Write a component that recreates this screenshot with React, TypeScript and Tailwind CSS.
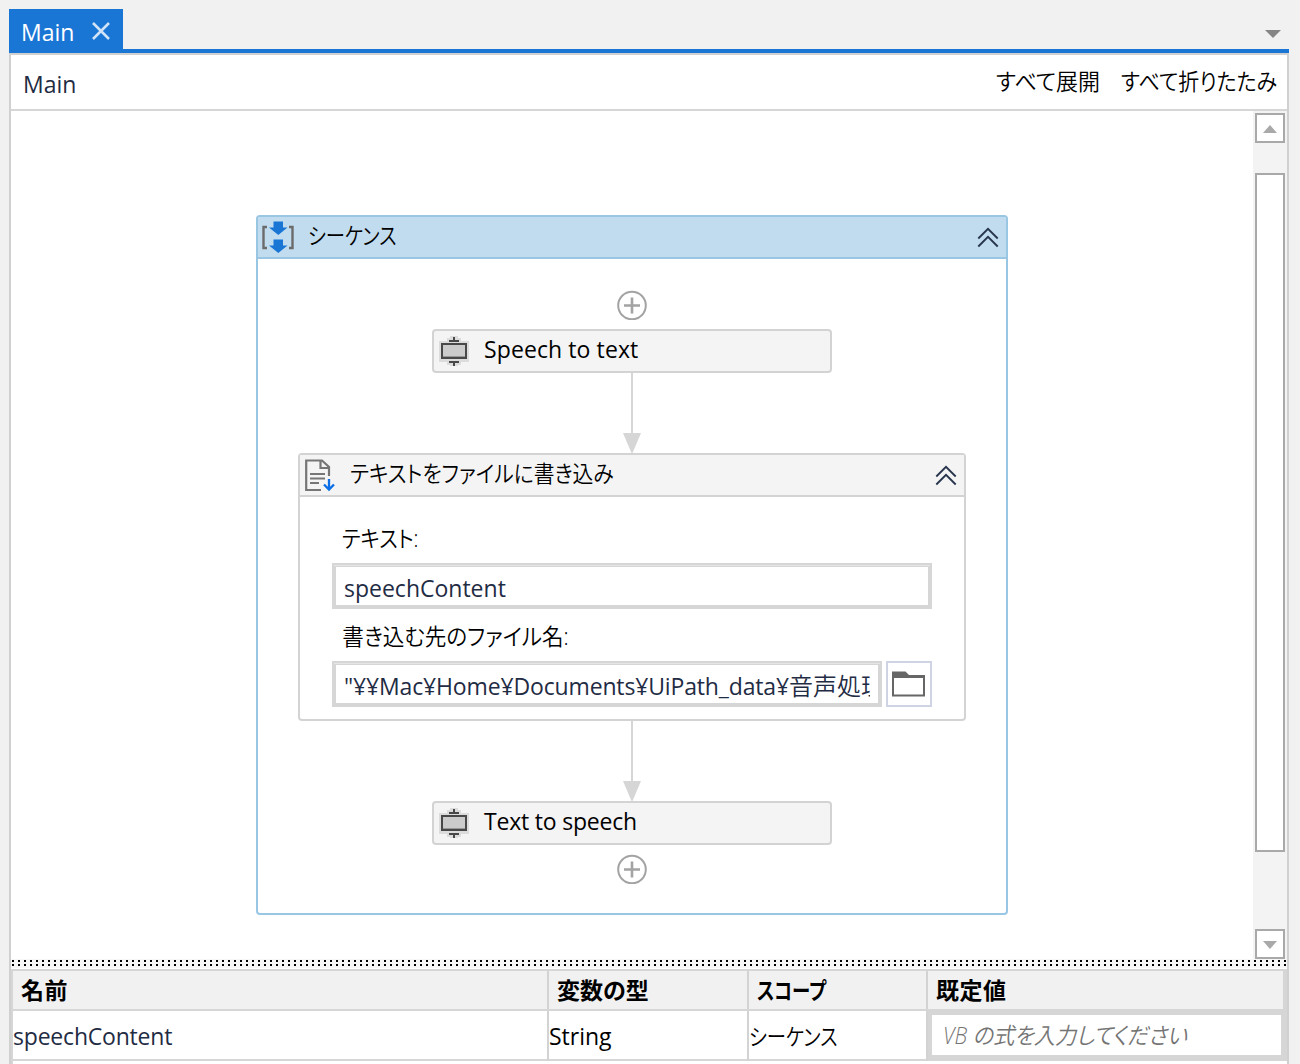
import type { ReactNode } from 'react';
import { clsx } from 'clsx';

const variable = {
  name: 'speechContent',
  type: 'String',
  scope: 'シーケンス',
};

function SequenceIcon() {
  return (
    <svg width="34" height="38" viewBox="0 0 34 38" className="shrink-0">
      <path d="M6 10H2.500v21H6M28 10h3.500v21H28" fill="none" stroke="#6b6b6b" strokeWidth="2.400" />
      <path d="M12.500 4.500h9.500v6h4.500l-9.200 7.500L8 10.500h4.500z" fill="#1976d5" />
      <path d="M12.500 22.500h9.500v6h4.500l-9.200 7.500L8 28.500h4.500z" fill="#1976d5" />
    </svg>
  );
}

function CollapseIcon() {
  return (
    <svg width="22" height="22" viewBox="0 0 22 22" fill="none" stroke="#27354d" strokeWidth="1.900" className="shrink-0">
      <path d="M1.300 11.500 11 1.800 20.700 11.500M1.300 19.500 11 9.800 20.700 19.500" />
    </svg>
  );
}

function ActivityIcon() {
  return (
    <svg width="30" height="32" viewBox="0 0 30 32" className="shrink-0">
      <path d="M11 1h8v2h3v3h8v21h-8v3h-3v1h-8v-1H8v-3H0V6h8V3h3z" fill="#dcdcdc" />
      <path d="M10 6h10M10 27h10" stroke="#484848" strokeWidth="2" />
      <path d="M15 2v4M15 27v4" stroke="#484848" strokeWidth="2" />
      <rect x="3" y="9" width="24" height="14" fill="#cbcbcb" stroke="#484848" strokeWidth="2" />
      <path d="M4 21.500h22" stroke="#989898" />
    </svg>
  );
}

function WriteFileIcon() {
  return (
    <svg width="30" height="33" viewBox="0 0 30 33" fill="none" strokeWidth="2.200" className="shrink-0">
      <path d="M24 17V8l-7-6.500H1.200V31H16M15.500 1v8H24" stroke="#767676" />
      <path d="M5 15h15M5 19.500h15M5 24h9" stroke="#767676" />
      <path d="M24 20v10M19 25.500l5 5 5-5" stroke="#0a6ee6" strokeWidth="2.300" />
    </svg>
  );
}

function FolderIcon() {
  return (
    <svg width="34" height="26" viewBox="0 0 34 26">
      <path d="M0 .500h13.500L17 4h16v21.500H0zM2 7v16.500h29V7z" fill="#666" fillRule="evenodd" />
    </svg>
  );
}

function AddButton() {
  return (
    <button className="shrink-0">
      <svg width="30" height="30" viewBox="0 0 30 30" fill="none" stroke="#a3a3a3" className="block">
        <circle cx="15" cy="15.500" r="13.800" strokeWidth="2" />
        <path d="M7 15.500h16M15 7.500v16" strokeWidth="2.600" />
      </svg>
    </button>
  );
}

function Arrow() {
  return (
    <svg width="18" height="80" viewBox="0 0 18 80" fill="#d6d6d6" className="block shrink-0">
      <path d="M8 0h2v60H8zM0 60h18L9.500 80h-1z" />
    </svg>
  );
}

function Activity({ children, className }: { children: ReactNode; className?: string }) {
  return (
    <div className="flex h-11 w-[400px] shrink-0 rounded border-2 border-[#d3d3d3] bg-[#f4f4f4] pl-[5px] pt-1">
      <ActivityIcon />
      <span className={clsx('ml-[15px] text-[23px] leading-[28px] text-black', className)}>{children}</span>
    </div>
  );
}

function ExpressionBox({ children, className }: { children: ReactNode; className?: string }) {
  return (
    <div className={clsx('h-[46px] border-2 border-[#d6d6d6] bg-[#e6e6e6] pt-px', className)}>
      <div className="h-[41px] border-x-2 border-b-2 border-t border-[#d6d6d6] bg-white px-2">
        <div className="overflow-hidden whitespace-nowrap pt-[3px] leading-[36px] text-[#1f2c44]">{children}</div>
      </div>
    </div>
  );
}

function ScrollButton({ down }: { down?: boolean }) {
  return (
    <button className="flex size-[30px] items-center justify-center border-2 border-[#a9a9a9] bg-white">
      <svg width="14" height="8" viewBox="0 0 14 8" fill="#a9a9a9" className="relative top-px">
        {down ? <path d="M0 0h14L7 8z" /> : <path d="M0 8h14L7 0z" />}
      </svg>
    </button>
  );
}

function Splitter() {
  return (
    <svg width="1276" height="9" className="block shrink-0 bg-[#f7f7f7]">
      <path d="M1 2h1275M1 6h1275" stroke="#000" strokeWidth="2" strokeDasharray="2 4" />
    </svg>
  );
}

export default function App() {
  return (
    <div className="flex h-[1064px] w-[1300px] flex-col overflow-hidden bg-[#f1f1f1] pl-[9px] pr-[11px] pt-[9px] font-['Open_Sans','Noto_Sans_CJK_JP',sans-serif] text-[23px] text-black [font-feature-settings:'palt']">
      {/* Tabs */}
      <div className="flex h-11 shrink-0 justify-between border-b-4 border-[#1976d5]">
        <div className="flex h-10 w-[114px] bg-[#1976d5] pl-3 text-white">
          <span className="pt-[5px] leading-[36px]">Main</span>
          <svg width="18" height="18" viewBox="0 0 18 18" stroke="#d1e4f7" strokeWidth="2.500" className="ml-[18px] mt-[13px]">
            <path d="M1 1l16 16M17 1L1 17" />
          </svg>
        </div>
        <svg width="16" height="8" viewBox="0 0 16 8" fill="#858585" className="mr-2 mt-[21px]">
          <path d="M0 0h16L8 8z" />
        </svg>
      </div>

      <div className="flex min-h-0 flex-1 flex-col border-x-2 border-t-2 border-[#d0d0d0] bg-white">
        {/* Breadcrumb and actions */}
        <div className="flex h-14 shrink-0 justify-between border-b-2 border-[#d6d6d6] pl-3 pr-[9px]">
          <span className="pt-[11px] leading-[36px] text-[#1f2c44]">Main</span>
          <div className="flex gap-[20px] whitespace-nowrap pt-2 font-[350] leading-[36px]">
            <button className="flex w-[105px] origin-left scale-x-[0.955]">すべて展開</button>
            <button className="flex w-[157px] origin-left scale-x-[0.91]">すべて折りたたみ</button>
          </div>
        </div>

        {/* Designer canvas */}
        <div className="flex h-[848px] shrink-0 justify-between">
          <div className="ml-[245px] mt-[104px] h-[700px] w-[752px] rounded border-2 border-[#99c7e3]">
            <div className="flex h-[42px] border-b-2 border-[#99c7e3] bg-[#c1dcee] pl-[3px] pr-[7px]">
              <SequenceIcon />
              <span className="ml-[13px] origin-left scale-x-[0.84] font-[350] leading-[36px]">シーケンス</span>
              <span className="ml-auto pt-[10px]"><CollapseIcon /></span>
            </div>
            <div className="flex flex-col items-center pt-[31px]">
              <AddButton />
              <div className="h-[9px]" />
              <Activity className="tracking-[0.1px]">Speech to text</Activity>
              <Arrow />
              <div className="h-[268px] w-[668px] rounded border-2 border-[#d3d3d3]">
                <div className="flex h-[42px] border-b-2 border-[#d3d3d3] bg-[#f4f4f4] pl-[5px] pr-[7px]">
                  <span className="pt-1"><WriteFileIcon /></span>
                  <span className="ml-[15px] origin-left scale-x-[0.904] font-[350] leading-[36px]">テキストをファイルに書き込み</span>
                  <span className="ml-auto pt-[10px]"><CollapseIcon /></span>
                </div>
                <div className="px-8">
                  <div className="h-[66px] origin-left scale-x-[0.895] pl-[11px] pt-[23px] font-[350] leading-[36px]">テキスト:</div>
                  <ExpressionBox>speechContent</ExpressionBox>
                  <div className="h-[52px] origin-left scale-x-[0.938] pl-[11px] pt-[9px] font-[350] leading-[36px]">
                    書き込む先のファイル名:
                  </div>
                  <div className="flex gap-1">
                    <ExpressionBox className="w-[550px]">
                      <span className="tracking-[-0.15px]">"¥¥Mac¥Home¥Documents¥UiPath_data¥</span>
                      <span className="text-[24px] font-[350] leading-none">音声処理</span>
                    </ExpressionBox>
                    <button className="flex size-[46px] items-center justify-center border-2 border-[#ced4e3] bg-white">
                      <FolderIcon />
                    </button>
                  </div>
                </div>
              </div>
              <Arrow />
              <Activity className="tracking-[-0.2px]">Text to speech</Activity>
              <div className="h-[9px]" />
              <AddButton />
            </div>
          </div>

          {/* Vertical scrollbar */}
          <div className="flex w-[34px] flex-col items-center bg-[#f3f3f3] pt-[2px]">
            <ScrollButton />
            <div className="mb-[77px] mt-[30px] h-[679px] w-[30px] border-2 border-[#a9a9a9] bg-white" />
            <ScrollButton down />
          </div>
        </div>

        <Splitter />

        {/* Variables */}
        <div className="mt-px flex-1 border-l-2 border-t-2 border-[#d6d6d6]">
          <div className="grid h-10 w-[1274px] grid-cols-[536px_200px_179px_359px] border-b-2 border-r-4 border-[#d6d6d6] bg-[#f1f1f1] font-bold leading-[38px]">
            <div className="border-r-2 border-[#d3d3d3] pl-2 tracking-[0.5px]">名前</div>
            <div className="border-r-2 border-[#d3d3d3] pl-2">変数の型</div>
            <div className="border-r-2 border-[#d3d3d3] pl-2">
              <span className="inline-block origin-left scale-x-[0.8]">スコープ</span>
            </div>
            <div className="pl-2 tracking-[0.5px]">既定値</div>
          </div>
          <div className="grid h-[50px] w-[1274px] grid-cols-[536px_200px_179px_359px] border-b-2 border-[#d6d6d6] leading-[50px]">
            <div className="border-r-2 border-[#d3d3d3] tracking-[-0.2px] text-[#1f2c44]">{variable.name}</div>
            <div className="border-r-2 border-[#d3d3d3]">{variable.type}</div>
            <div className="border-r-2 border-[#d3d3d3]">
              <span className="inline-block origin-left scale-x-[0.84] font-[350]">{variable.scope}</span>
            </div>
            <div className="h-12 border-y-4 border-l-4 border-r-6 border-[#d6d6d6] bg-white pl-[11px] font-[350] italic leading-[40px] text-[#747474]">
              <span className="inline-block origin-left scale-x-[0.92]">VB の式を入力してください</span>
            </div>
          </div>
        </div>
      </div>
    </div>
  );
}
